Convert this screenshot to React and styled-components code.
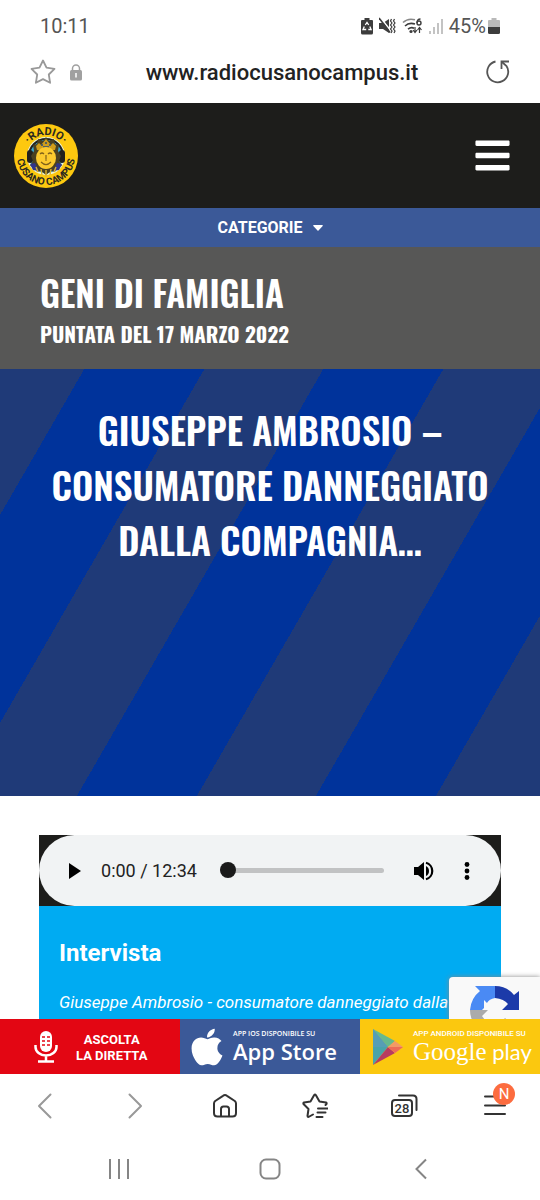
import React from 'react'
import styled, { createGlobalStyle } from 'styled-components'
import { FaApple, FaBars } from 'react-icons/fa'

const GlobalStyle = createGlobalStyle`
  * {
    box-sizing: border-box;
  }

  body {
    margin: 0;
    background: #fff;
    font-family: Roboto, "Liberation Sans", sans-serif;
    color: #1d1d1b;
  }

  h1, h2, h3, p {
    margin: 0;
  }

  button {
    padding: 0;
    border: 0;
    background: none;
    color: inherit;
    font: inherit;
    cursor: pointer;
  }

  a {
    color: inherit;
    text-decoration: none;
  }

  svg {
    display: block;
  }
`;

const StatusIcons = () => (
  <StatusRight>
    <svg width="12" height="18" viewBox="0 0 12 18">
      <path d="M3.5 1h5v2H11a1 1 0 0 1 1 1v12a1.500 1.500 0 0 1-1.500 1.500h-9A1.500 1.500 0 0 1 0 16V4a1 1 0 0 1 1-1h2.500z" fill="#3c3c3c" />
      <path d="M4.300 8 6 5.500 7.700 8M8.800 9.500l1.300 3H7.300M5.200 12.500H2L3.300 9.500" fill="none" stroke="#fff" strokeWidth="1.300" />
    </svg>
    <svg width="17" height="18" viewBox="0 0 17 18">
      <path d="M0 6h4l6-4v14l-6-4H0z" fill="#3c3c3c" />
      <path d="M1 0 12 14" stroke="#fff" strokeWidth="1.500" />
      <path d="M0 1 11 15.500" stroke="#3c3c3c" strokeWidth="1.600" />
      <path d="m12.500 2-1 2 1.500 2-1.500 2 1.500 2-1.500 2 1.500 2-1 2M15.500 2l-1 2 1.500 2-1.500 2 1.500 2-1.500 2 1.500 2-1 2" fill="none" stroke="#3c3c3c" strokeWidth="1.200" />
    </svg>
    <svg width="21" height="18" viewBox="0 0 21 18">
      <g fill="none" stroke="#3c3c3c" strokeWidth="1.600">
        <path d="M1 5.500Q6 .8 13 2.800" stroke="#888" />
        <path d="M3 9q4-4 10-2" />
        <path d="M6 12.200q3-2.500 6-1" />
        <path d="M13 10v5m-2-2 2 2.500 2-2.500M17.500 16v-5m-2 2 2-2.500 2 2.500" strokeWidth="1.200" />
        <path d="M18.500 2Q15 2 15 6" strokeWidth="1.400" />
        <circle cx="17" cy="6" r="2" strokeWidth="1.400" />
      </g>
      <circle cx="9" cy="14.500" r="1.600" fill="#3c3c3c" />
    </svg>
    <svg width="14" height="18" viewBox="0 0 14 18">
      <path d="M1 14v3M5 10v7M9 6v11M13 2v15" stroke="#b5b5b5" strokeWidth="1.600" />
    </svg>
    <Battery>
      45%
      <svg width="12" height="18" viewBox="0 0 12 18">
        <path d="M3.500 1h5v2H11a1 1 0 0 1 1 1v6H0V4a1 1 0 0 1 1-1h2.500z" fill="#b9b9b9" />
        <path d="M0 10h12v5.500a1.500 1.500 0 0 1-1.500 1.500h-9A1.500 1.500 0 0 1 0 15.500z" fill="#3c3c3c" />
      </svg>
    </Battery>
  </StatusRight>
)

const RadioLogo = () => (
  <svg width="64" height="64" viewBox="0 0 64 64" aria-label="Radio Cusano Campus">
    <defs>
      <path id="arcTop" d="M11 32a21 21 0 0 1 42 0" />
      <path id="arcBottom" d="M3 22v10a29 29 0 0 0 58 0v-10" />
    </defs>
    <circle cx="32" cy="32" r="32" fill="#fdc80f" />
    <circle cx="32" cy="32" r="19" fill="#e9f4dc" />
    <circle cx="32" cy="32" r="17" fill="#3aa9d2" />
    <path d="M15 32a17 17 0 0 1 34 0" fill="none" stroke="#22211d" strokeWidth="2" />
    <rect x="13" y="26" width="6" height="13" rx="3" fill="#22211d" />
    <rect x="45" y="26" width="6" height="13" rx="3" fill="#22211d" />
    <path d="m32 13 3 4 5-2 1 5 4 1-1 6 3 5-2 5 3 5-5 1-2 5-4-1-5 4-5-4-4 1-2-5-5-1 3-5-2-5 3-5-1-6 4-1 1-5 5 2z" fill="#4a4021" />
    <path d="m22 22 3-3 2 2 5-6 5 6 2-2 3 3-1 4H23z" fill="#cf9d1b" />
    <path d="M27 21h2M31 19h2M35 21h2M29 23h6" stroke="#2c4e78" strokeWidth="1.500" />
    <path d="m16 40 5-1 4 8-6-1zM48 40l-5-1-4 8 6-1z" fill="#31358a" />
    <ellipse cx="32" cy="34" rx="10" ry="11" fill="#fcca2e" />
    <path d="M26 30q2-2 4 0M34 30q2-2 4 0M32 31v4m-1 1h2M27 38q5 5 10 0" fill="none" stroke="#80611a" strokeWidth="1.200" />
    <path d="m22 43 2 5M27 45l1 6M32 46v7M37 45l-1 6M42 43l-2 5" stroke="#e0b52a" strokeWidth="1.400" />
    <LogoText $size="11px">
      <textPath href="#arcTop" startOffset="50%" textAnchor="middle">·RADIO·</textPath>
    </LogoText>
    <LogoText $size="10px">
      <textPath href="#arcBottom" startOffset="50%" textAnchor="middle">CUSANO CAMPUS</textPath>
    </LogoText>
  </svg>
)

const Player = () => {
  const [time, setTime] = React.useState(0)
  const minutes = Math.floor(time / 60)
  const seconds = String(time % 60).padStart(2, "0")

  return (
    <PlayerWrap>
      <PlayerBar>
        <button type="button" aria-label="Play">
          <svg width="14" height="16" viewBox="0 0 14 16"><path d="M1 0v16l12-8z" /></svg>
        </button>
        <PlayerTime>{minutes}:{seconds} / 12:34</PlayerTime>
        <Seek type="range" aria-label="Posizione" min="0" max="754" value={time} onChange={(e) => setTime(Number(e.target.value))} />
        <button type="button" aria-label="Volume">
          <svg width="22" height="20" viewBox="0 0 22 20">
            <path d="M1 6h4l6-5v18l-6-5H1z" />
            <path d="M13 5q3 1.500 3 5t-3 5z" />
            <path d="M13 1.800a8.500 8.500 0 0 1 0 16.400" fill="none" stroke="#000" strokeWidth="2.200" />
          </svg>
        </button>
        <button type="button" aria-label="Altre opzioni">
          <svg width="6" height="18" viewBox="0 0 6 18">
            <circle cx="3" cy="2.500" r="2.400" />
            <circle cx="3" cy="9" r="2.400" />
            <circle cx="3" cy="15.500" r="2.400" />
          </svg>
        </button>
      </PlayerBar>
    </PlayerWrap>
  )
}

const Microphone = () => (
  <svg width="24" height="32" viewBox="0 0 24 32">
    <rect x="6" y="0" width="12" height="21" rx="6" fill="#fff" />
    <path d="M8 6h3M13 6h3M8 10h3M13 10h3M8 14h3M13 14h3" stroke="#e30613" strokeWidth="1.500" />
    <path d="M1.500 14v2a10.500 8.500 0 0 0 21 0v-2M12 25v5M4 30.500h16" fill="none" stroke="#fff" strokeWidth="2.500" />
  </svg>
)

const PlayMark = () => (
  <svg width="30" height="36" viewBox="0 0 30 36">
    <path d="M0 0v36l15-18z" fill="#49a3aa" />
    <path d="m0 0 22 12-7 6z" fill="#66b98e" />
    <path d="M0 0v18l15 0z" fill="#569eb5" />
    <path d="m0 36 15-18 7 6z" fill="#b83b61" />
    <path d="m22 12 8 6-8 6-7-6z" fill="#f29a66" />
    <path d="M15 18h15l-8 6z" fill="#ed6c57" />
  </svg>
)

const App = () => {
  return (
    <>
      <GlobalStyle />
      <Screen>
        <StatusBar>
          <span>10:11</span>
          <StatusIcons />
        </StatusBar>
        <AddressBar>
          <AddressSide>
            <button type="button" aria-label="Preferiti">
              <svg width="26" height="26" viewBox="0 0 26 26" fill="none" stroke="#999" strokeWidth="1.800" strokeLinejoin="round">
                <path d="m13 1.500 3.500 7.200 8 1.200-5.700 5.600 1.300 8.300-7.100-3.700-7.100 3.700 1.300-8.300L1.500 9.900l8-1.200z" />
              </svg>
            </button>
            <svg width="12" height="17" viewBox="0 0 12 17">
              <path d="M2.500 7V4.500a3.500 3.500 0 0 1 7 0V7" fill="none" stroke="#a0a0a0" strokeWidth="1.500" />
              <rect y="6" width="12" height="10.500" rx="1.500" fill="#a0a0a0" />
              <path d="M6 9v4.500" stroke="#fff" strokeWidth="1.500" />
            </svg>
          </AddressSide>
          <Url>www.radiocusanocampus.it</Url>
          <AddressSide $end>
            <button type="button" aria-label="Ricarica">
              <svg width="24" height="24" viewBox="0 0 24 24" fill="none" stroke="#555" strokeWidth="1.800">
                <path d="M9.500 1.500A10.500 10.500 0 1 0 20.500 6L16 2" />
                <path d="M23 1.500h-7.500V9" />
              </svg>
            </button>
          </AddressSide>
        </AddressBar>

        <Viewport>
          <SiteHeader>
            <a href="#home"><RadioLogo /></a>
            <button type="button" aria-label="Menu"><FaBars size={39} /></button>
          </SiteHeader>
          <Categories type="button">
            CATEGORIE
            <svg width="10" height="6" viewBox="0 0 10 6"><path d="M.7 0h8.600a.6.6 0 0 1 .4 1L5.500 5.600a.7.7 0 0 1-1 0L.3 1a.6.6 0 0 1 .4-1z" fill="#fff" /></svg>
          </Categories>
          <ShowInfo>
            <h1>GENI DI FAMIGLIA</h1>
            <h2>PUNTATA DEL 17 MARZO 2022</h2>
          </ShowInfo>
          <Hero>
            <h2>GIUSEPPE AMBROSIO – CONSUMATORE DANNEGGIATO DALLA COMPAGNIA…</h2>
          </Hero>
          <Episode>
            <Player />
            <EpisodeText>
              <h3>Intervista</h3>
              <p>Giuseppe Ambrosio - consumatore danneggiato dalla</p>
            </EpisodeText>
          </Episode>
          <Captcha>
            <svg width="50" height="50" viewBox="0 0 50 50">
              <path d="M5 0h20v12q-6 1-8 5l-3-3v8l-2 2H0Q1 12 10 5z" fill="#4a8af4" />
              <path d="M25 0q12 0 19 9l5-4v19H32l6-6q-4-5-13-6z" fill="#1c3aa9" />
              <path d="M0 24h18l-6 6q5 8 13 7 6 0 10-5l9 8Q37 50 26 50 13 50 7 41 0 34 0 24z" fill="#ababab" />
            </svg>
          </Captcha>
        </Viewport>

        <Banners>
          <Banner href="#diretta" $color="#e30613" $start="34px" $gap="18px">
            <Microphone />
            <Listen>ASCOLTA<br />LA DIRETTA</Listen>
          </Banner>
          <Banner href="#ios" $color="#3b5998" $start="6px" $gap="5px">
            <FaApple size={42} />
            <Store>
              <small>APP IOS DISPONIBILE SU</small>
              <strong>App Store</strong>
            </Store>
          </Banner>
          <Banner href="#android" $color="#fbc80f" $start="13px" $gap="10px">
            <PlayMark />
            <Store $google>
              <small>APP ANDROID DISPONIBILE SU</small>
              <strong><GoogleWord>Google</GoogleWord> play</strong>
            </Store>
          </Banner>
        </Banners>

        <BrowserNav>
          <NavButton type="button" aria-label="Indietro" $muted>
            <svg width="26" height="26" viewBox="0 0 26 26"><path d="M18.500 1.500 7 13l11.500 11.500" /></svg>
          </NavButton>
          <NavButton type="button" aria-label="Avanti" $muted>
            <svg width="26" height="26" viewBox="0 0 26 26"><path d="M7.500 1.500 19 13 7.500 24.500" /></svg>
          </NavButton>
          <NavButton type="button" aria-label="Home">
            <svg width="26" height="26" viewBox="0 0 26 26">
              <path d="M2 10.500q0-1.500 1.200-2.500L11 2.800q2-1.500 4 0L22.800 8Q24 9 24 10.500V20q0 3.500-3.500 3.500h-15Q2 23.500 2 20z" />
              <path d="M9 23v-7q0-2.500 2.500-2.500h3q2.500 0 2.500 2.500v7" />
            </svg>
          </NavButton>
          <NavButton type="button" aria-label="Segnalibri">
            <svg width="26" height="26" viewBox="0 0 26 26">
              <path d="M11 21.500 6.500 24q-1 0-1-1l1-7L1.500 11q-.5-1 .5-1.500l6.500-1L12.200 2q.8-1 1.600 0l3.700 6.500 6.500 1q1 .5.500 1.500l-1 1" />
              <path d="M16 15.500h9.500M15.500 19.500h8M14.500 24h6" />
            </svg>
          </NavButton>
          <NavButton type="button" aria-label="Schede">
            <svg width="28" height="26" viewBox="0 0 28 26">
              <rect x="1" y="7" width="20" height="16" rx="3" />
              <path d="M8 2.500h14q3.500 0 3.500 3.500v11" />
              <TabCount x="11" y="19.500">28</TabCount>
            </svg>
          </NavButton>
          <NavButton type="button" aria-label="Altro">
            <svg width="26" height="26" viewBox="0 0 26 26"><path d="M3 3.500h20M3 12.500h20M3 21h20" /></svg>
            <Badge>N</Badge>
          </NavButton>
        </BrowserNav>

        <SystemNav>
          <button type="button" aria-label="Recenti">
            <svg width="22" height="22" viewBox="0 0 22 22"><path d="M2 1v20M11 1v20M20 1v20" /></svg>
          </button>
          <button type="button" aria-label="Schermata Home">
            <svg width="22" height="22" viewBox="0 0 22 22"><rect x="1.500" y="1.500" width="19" height="19" rx="5.500" /></svg>
          </button>
          <button type="button" aria-label="Torna indietro">
            <svg width="22" height="22" viewBox="0 0 22 22"><path d="M16 1.500 6.500 11l9.500 9.500" /></svg>
          </button>
        </SystemNav>
      </Screen>
    </>
  )
}

const Screen = styled.div`
  display: flex;
  flex-direction: column;
  height: 100vh;
  overflow: hidden;
`;

const StatusBar = styled.div`
  display: flex;
  flex: none;
  align-items: center;
  justify-content: space-between;
  height: 43px;
  padding: 8px 40px 0;
  font-size: 20px;
  line-height: 24px;
  color: #555;
`;

const StatusRight = styled.div`
  display: flex;
  align-items: center;
  gap: 6px;
`;

const Battery = styled.span`
  display: flex;
  align-items: center;
  gap: 2px;
`;

const AddressBar = styled.div`
  display: flex;
  flex: none;
  align-items: center;
  height: 60px;
  padding: 0 30px 2px;
`;

const AddressSide = styled.div`
  display: flex;
  flex: 1;
  align-items: center;
  gap: 14px;
  justify-content: ${(props) => (props.$end ? 'flex-end' : 'flex-start')};
`;

const Url = styled.span`
  padding-left: 24px;
  font-size: 22px;
  font-weight: 500;
  color: #222;
`;

const Viewport = styled.main`
  position: relative;
  flex: 1;
  min-height: 0;
  overflow: hidden;
`;

const SiteHeader = styled.header`
  display: flex;
  align-items: center;
  justify-content: space-between;
  height: 105px;
  padding: 0 28px 0 14px;
  background: #1d1d1b;
  color: #fff;
`;

const LogoText = styled.text`
  font-family: Roboto, sans-serif;
  font-size: ${(props) => props.$size};
  font-weight: 700;
  fill: #2a2820;
`;

const Categories = styled.button`
  display: flex;
  align-items: center;
  justify-content: center;
  gap: 10px;
  width: 100%;
  height: 39px;
  background: #3b5998;
  color: #fff;
  font-size: 16px;
  font-weight: 700;
`;

const displayFont = 'Oswald, "Liberation Sans Narrow", sans-serif';

const ShowInfo = styled.section`
  padding: 19px 40px 20px;
  background: #575756;
  color: #fff;
  font-family: ${displayFont};

  h1 {
    font-size: 35px;
    font-weight: 600;
    line-height: 52px;
  }

  h2 {
    font-size: 21px;
    font-weight: 700;
    line-height: 31px;
  }
`;

const Hero = styled.section`
  height: 427px;
  padding: 33px 39px;
  background: repeating-linear-gradient(
    120deg,
    #1f3a78 0 73px,
    #00339b 73px 177px,
    #1f3a78 177px 207px
  );
  color: #fff;
  text-align: center;

  h2 {
    font-family: ${displayFont};
    font-size: 37px;
    font-weight: 600;
    line-height: 55px;
  }
`;

const Episode = styled.section`
  padding: 39px 39px 0;
`;

const PlayerWrap = styled.div`
  background: #1d1d1b;
`;

const PlayerBar = styled.div`
  display: flex;
  align-items: center;
  height: 71px;
  padding: 0 31px 0 29px;
  gap: 29px;
  border-radius: 36px;
  background: #f1f3f4;
  color: #000;

  button {
    flex: none;
  }
`;

const PlayerTime = styled.span`
  flex: none;
  margin: 0 -6px 0 -10px;
  font-size: 18px;
  color: #222;
`;

const Seek = styled.input`
  flex: 1;
  min-width: 0;
  height: 18px;
  margin: 0;
  appearance: none;
  background: transparent;

  &::-webkit-slider-runnable-track {
    height: 5px;
    border-radius: 3px;
    background: #c1c2c3;
  }

  &::-webkit-slider-thumb {
    appearance: none;
    width: 16px;
    height: 16px;
    margin-top: -6px;
    border-radius: 50%;
    background: #1a1a1a;
  }
`;

const EpisodeText = styled.div`
  min-height: 160px;
  padding: 32px 20px;
  background: #00abf2;
  color: #fff;

  h3 {
    margin-bottom: 20px;
    font-size: 24px;
    line-height: 30px;
  }

  p {
    font-size: 17px;
    font-style: italic;
    line-height: 28px;
    white-space: nowrap;
  }
`;

const Captcha = styled.div`
  position: absolute;
  right: 0;
  bottom: 0;
  width: 91px;
  height: 42px;
  padding: 9px 21px;
  overflow: hidden;
  border-radius: 4px 0 0 0;
  background: #f9f9f9;
  box-shadow: 0 0 5px #888;
`;

const Banners = styled.div`
  display: grid;
  flex: none;
  grid-template-columns: repeat(3, 1fr);
  height: 55px;
`;

const Banner = styled.a`
  display: flex;
  align-items: center;
  gap: ${(props) => props.$gap};
  padding-left: ${(props) => props.$start};
  overflow: hidden;
  background: ${(props) => props.$color};
  color: #fff;

  svg {
    flex: none;
  }
`;

const Listen = styled.span`
  padding-top: 2px;
  font-size: 13px;
  font-weight: 700;
  line-height: 16px;
  text-align: center;
`;

const Store = styled.span`
  display: flex;
  flex-direction: column;
  white-space: nowrap;
  font-family: ${(props) => (props.$google ? 'Lato' : '"Open Sans"')}, "Noto Sans", sans-serif;

  small {
    font-family: ${(props) => (props.$google ? 'Roboto' : '"Open Sans"')}, sans-serif;
    font-size: ${(props) => (props.$google ? '8px' : '7px')};
    font-weight: ${(props) => (props.$google ? 500 : 600)};
    line-height: 10px;
  }

  strong {
    font-size: 22px;
    font-weight: ${(props) => (props.$google ? 400 : 600)};
    line-height: 25px;
  }
`;

const GoogleWord = styled.span`
  font-family: "Liberation Serif", serif;
  font-size: 25px;
`;

const BrowserNav = styled.nav`
  display: grid;
  flex: none;
  grid-template-columns: repeat(6, 1fr);
  height: 64px;
`;

const NavButton = styled.button`
  position: relative;
  display: flex;
  align-items: center;
  justify-content: center;

  svg {
    fill: none;
    stroke: ${(props) => (props.$muted ? '#999' : '#333')};
    stroke-width: 2;
    stroke-linecap: round;
    stroke-linejoin: round;
  }
`;

const TabCount = styled.text`
  fill: #333;
  stroke: none;
  font-size: 13px;
  font-weight: 500;
  text-anchor: middle;
`;

const Badge = styled.span`
  position: absolute;
  top: 9px;
  left: 48%;
  width: 22px;
  height: 22px;
  border-radius: 50%;
  background: #fc6c3f;
  color: #fff;
  font-size: 15px;
  line-height: 22px;
  text-align: center;
`;

const SystemNav = styled.nav`
  display: flex;
  flex: none;
  align-items: center;
  justify-content: space-between;
  height: 62px;
  padding: 0 108px;

  svg {
    fill: none;
    stroke: #858585;
    stroke-width: 2;
  }
`;

export default App
